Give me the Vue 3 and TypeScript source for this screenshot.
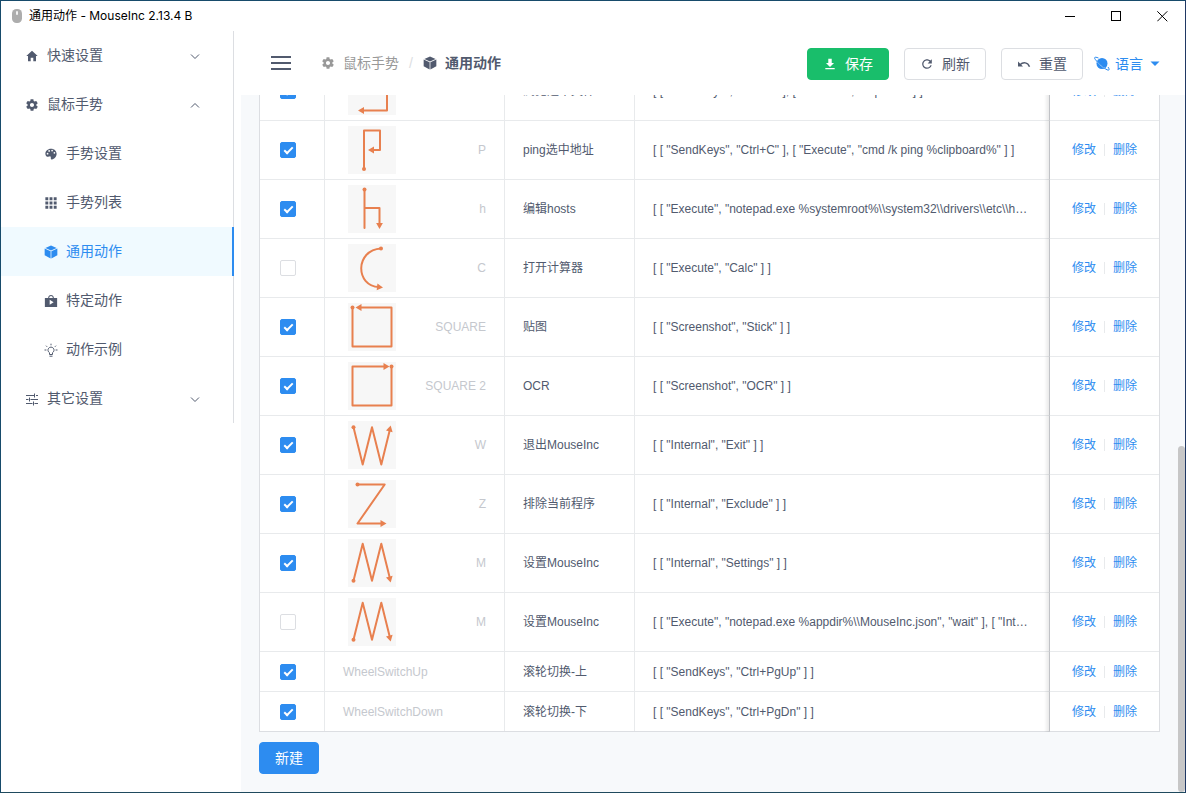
<script setup lang="ts">
import { nextTick, onMounted, ref } from 'vue'

type Point = [number, number]
type IconName =
  | 'home' | 'cog' | 'palette' | 'apps' | 'cube' | 'play' | 'bulb' | 'options'

interface MenuItem {
  label: string
  icon: IconName
  sub?: boolean
  active?: boolean
  arrow?: 'down' | 'up'
}

interface Action {
  enabled: boolean
  gesture?: string
  key: string
  name: string
  command: string
}

interface Gesture {
  start: Point
  path: string
  from: Point
  tip: Point
}

const icons: Record<IconName, string> = {
  home: 'M208 448V320h96v128h97.6V256H464L256 64 48 256h62.4v192z',
  cog: 'M413.967 276.8c1.06-6.235 1.06-13.518 1.06-20.8s-1.06-13.518-1.06-20.8l44.667-34.318c4.26-3.118 5.319-8.317 2.13-13.518L418.215 115.6c-2.129-4.164-8.507-6.235-12.767-4.164l-53.186 20.801c-10.638-8.32-23.4-15.601-36.16-20.801l-7.44-55.117c-1.06-4.157-5.319-8.319-10.638-8.319h-85.096c-5.319 0-9.577 4.161-10.638 8.319l-8.508 55.117c-12.767 5.2-24.464 12.482-36.171 20.801l-53.186-20.801c-5.319-2.071-10.638 0-12.767 4.164L49.1 187.365c-2.119 4.153-1.061 10.399 2.129 13.518L96.97 235.2c0 7.282-1.06 13.518-1.06 20.8s1.06 13.518 1.06 20.8l-44.668 34.318c-4.26 3.118-5.318 8.317-2.13 13.518L92.721 396.4c2.13 4.164 8.508 6.235 12.767 4.164l53.187-20.801c10.637 8.32 23.397 15.601 36.16 20.801l8.508 55.117c1.069 5.2 5.318 8.319 10.637 8.319h85.096c5.319 0 9.578-4.161 10.638-8.319l8.518-55.117c12.757-5.2 24.464-12.482 36.16-20.801l53.187 20.801c5.318 2.071 10.637 0 12.767-4.164l42.549-71.765c2.129-4.153 1.06-10.399-2.13-13.518l-46.8-34.317zm-158.499 52c-41.489 0-74.46-32.235-74.46-72.8s32.971-72.8 74.46-72.8 74.461 32.235 74.461 72.8-32.972 72.8-74.461 72.8z',
  palette: 'M256 60C135 60 50 145 50 245c0 76 44 114 98 114 34 0 58-20 82-16 26 5 20 32 18 56-3 34 12 58 42 56 92-8 172-96 172-204C462 143 372 60 256 60zM130 276a32 32 0 1 1 0-64 32 32 0 0 1 0 64zm58-98a32 32 0 1 1 0-64 32 32 0 0 1 0 64zm108-14a32 32 0 1 1 0-64 32 32 0 0 1 0 64zm84 82a32 32 0 1 1 0-64 32 32 0 0 1 0 64z',
  apps: 'M50 50h106v106H50zM203 50h106v106H203zM356 50h106v106H356zM50 203h106v106H50zM203 203h106v106H203zM356 203h106v106H356zM50 356h106v106H50zM203 356h106v106H203zM356 356h106v106H356z',
  cube: 'M256 16L50 106l206 96 206-96zM24 128v244l218 120V228zM488 128L270 228v264l218-120z',
  play: 'M360 144v-8c0-58-47-104-104-104s-104 46-104 104v8H32v328h448V144zm-168-8c0-35 29-64 64-64s64 29 64 64v8H192zm16 256V212l144 90z',
  bulb: '',
  options: ''
}

const menu: MenuItem[] = [
  { label: '快速设置', icon: 'home', arrow: 'down' },
  { label: '鼠标手势', icon: 'cog', arrow: 'up' },
  { label: '手势设置', icon: 'palette', sub: true },
  { label: '手势列表', icon: 'apps', sub: true },
  { label: '通用动作', icon: 'cube', sub: true, active: true },
  { label: '特定动作', icon: 'play', sub: true },
  { label: '动作示例', icon: 'bulb', sub: true },
  { label: '其它设置', icon: 'options', arrow: 'down' }
]

const gestures: Record<string, Gesture> = {
  hook: { start: [10, 5], path: 'M10 5H39V43.5H15', from: [39, 43.5], tip: [10, 43.5] },
  p: { start: [16, 43], path: 'M16 43V4.500H32V24H25', from: [32, 24], tip: [20, 24] },
  h: { start: [16.5, 4.5], path: 'M16.5 4.500V43V23H31.5V39', from: [31.5, 23], tip: [31.5, 44] },
  c: { start: [33, 4.5], path: 'M33 4.500C7 6 7 42 31 43', from: [27, 42.6], tip: [35, 43.5] },
  square: { start: [4.5, 4.5], path: 'M4.500 4.500V43.5H43.5V4.500H12', from: [43.5, 4.5], tip: [7.5, 4.5] },
  square2: { start: [43.5, 4.5], path: 'M43.5 4.500V43.5H4.500V4.500H37', from: [4.5, 4.5], tip: [41.5, 4.5] },
  w: { start: [5.5, 6.3], path: 'M5.500 6.300L14.7 43.5L24 6.300L33.3 43.5L41.8 9', from: [33.3, 43.5], tip: [42.7, 4.5] },
  z: { start: [9.5, 4.5], path: 'M9.500 4.500H36.7L9.500 43.5H34', from: [9.5, 43.5], tip: [38.5, 43.5] },
  m: { start: [5.5, 41.7], path: 'M5.500 41.7L14.7 4.800L24 41.7L33.3 4.800L41.8 39', from: [33.3, 4.8], tip: [42.7, 43.5] }
}

function arrowHead(g: Gesture): string {
  const dx = g.tip[0] - g.from[0]
  const dy = g.tip[1] - g.from[1]
  const len = Math.hypot(dx, dy)
  const ux = dx / len
  const uy = dy / len
  const bx = g.tip[0] - ux * 6
  const by = g.tip[1] - uy * 6
  const half = 3.4
  return `${g.tip[0]},${g.tip[1]} ${bx - uy * half},${by + ux * half} ${bx + uy * half},${by - ux * half}`
}

const actions = ref<Action[]>([
  { enabled: true, gesture: 'hook', key: '', name: '浏览选中文件', command: '[ [ "SendKeys", "Ctrl+C" ], [ "Execute", "explorer" ] ]' },
  { enabled: true, gesture: 'p', key: 'P', name: 'ping选中地址', command: '[ [ "SendKeys", "Ctrl+C" ], [ "Execute", "cmd /k ping %clipboard%" ] ]' },
  { enabled: true, gesture: 'h', key: 'h', name: '编辑hosts', command: '[ [ "Execute", "notepad.exe %systemroot%\\\\system32\\\\drivers\\\\etc\\\\hosts" ] ]' },
  { enabled: false, gesture: 'c', key: 'C', name: '打开计算器', command: '[ [ "Execute", "Calc" ] ]' },
  { enabled: true, gesture: 'square', key: 'SQUARE', name: '贴图', command: '[ [ "Screenshot", "Stick" ] ]' },
  { enabled: true, gesture: 'square2', key: 'SQUARE 2', name: 'OCR', command: '[ [ "Screenshot", "OCR" ] ]' },
  { enabled: true, gesture: 'w', key: 'W', name: '退出MouseInc', command: '[ [ "Internal", "Exit" ] ]' },
  { enabled: true, gesture: 'z', key: 'Z', name: '排除当前程序', command: '[ [ "Internal", "Exclude" ] ]' },
  { enabled: true, gesture: 'm', key: 'M', name: '设置MouseInc', command: '[ [ "Internal", "Settings" ] ]' },
  { enabled: false, gesture: 'm', key: 'M', name: '设置MouseInc', command: '[ [ "Execute", "notepad.exe %appdir%\\\\MouseInc.json", "wait" ], [ "Internal", "Reload" ] ]' },
  { enabled: true, key: 'WheelSwitchUp', name: '滚轮切换-上', command: '[ [ "SendKeys", "Ctrl+PgUp" ] ]' },
  { enabled: true, key: 'WheelSwitchDown', name: '滚轮切换-下', command: '[ [ "SendKeys", "Ctrl+PgDn" ] ]' }
])

const scroller = ref<HTMLElement | null>(null)

onMounted(async () => {
  await nextTick()
  if (scroller.value) scroller.value.scrollTop = scroller.value.scrollHeight
})
</script>

<template>
  <div class="window">
    <header class="titlebar">
      <svg class="mouse" viewBox="0 0 12 16" aria-hidden="true">
        <rect x="1" y="1" width="10" height="14" rx="4.5" fill="#adadad" />
        <rect x="5" y="3" width="2" height="4" rx="1" fill="#f2f2f2" />
      </svg>
      <span class="title">通用动作 - MouseInc 2.13.4 B</span>
      <div class="controls">
        <button type="button" aria-label="最小化">
          <svg viewBox="0 0 11 11"><path d="M0 5.500h10" /></svg>
        </button>
        <button type="button" aria-label="最大化">
          <svg viewBox="0 0 11 11"><path d="M.5.5h9v9h-9z" /></svg>
        </button>
        <button type="button" aria-label="关闭">
          <svg viewBox="0 0 11 11" class="smooth"><path d="M.3.3l10 10M10.3.3l-10 10" /></svg>
        </button>
      </div>
    </header>

    <div class="body">
      <aside class="sidebar">
        <nav>
          <ul class="menu">
            <li v-for="item in menu" :key="item.label">
              <a href="#" class="entry" :class="{ sub: item.sub, active: item.active }">
                <svg v-if="item.icon === 'bulb'" class="icon line" viewBox="0 0 14 14">
                  <path d="M5.500 11.500V9.700a3 3 0 1 1 3 0v1.800zM5.500 13.200h3M7 .7v1.600M2 2.700l1.100 1.100M12 2.700l-1.100 1.100M.5 7h1.900M11.600 7h1.900" />
                </svg>
                <svg v-else-if="item.icon === 'options'" class="icon line" viewBox="0 0 14 14">
                  <path d="M1 3.500h8M11 3.500h2M1 7.500h2.500M5.500 7.500H13M1 11.500h6.500M9.500 11.500H13M9.500 1.500v4M4.500 5.500v4M8.500 9.500v4" />
                </svg>
                <svg v-else class="icon" viewBox="0 0 512 512"><path :d="icons[item.icon]" /></svg>
                <span class="label">{{ item.label }}</span>
                <svg v-if="item.arrow" class="icon line chevron" viewBox="0 0 14 14">
                  <path :d="item.arrow === 'down' ? 'M3 5.5l4 4 4-4' : 'M3 9.5l4-4 4 4'" />
                </svg>
              </a>
            </li>
          </ul>
        </nav>
      </aside>

      <main class="main">
        <div class="toolbar">
          <button type="button" class="burger" aria-label="菜单">
            <svg viewBox="0 0 20 14"><path d="M0 1h20M0 7h20M0 13h20" /></svg>
          </button>
          <nav class="crumbs">
            <a href="#" class="crumb">
              <svg class="icon" viewBox="0 0 512 512"><path :d="icons.cog" /></svg>
              <span>鼠标手势</span>
            </a>
            <span class="slash">/</span>
            <span class="crumb current">
              <svg class="icon" viewBox="0 0 512 512"><path :d="icons.cube" /></svg>
              <span>通用动作</span>
            </span>
          </nav>
          <div class="tools">
            <button type="button" class="btn success">
              <svg class="icon" viewBox="0 0 512 512"><path d="M403 217h-84V64H193v153h-84l147 147zM85 398v50h342v-50z" /></svg>
              <span>保存</span>
            </button>
            <button type="button" class="btn">
              <svg class="icon" viewBox="0 0 512 512"><path d="M256 388c-72.600 0-132-59.400-132-132s59.400-132 132-132c36.300 0 69.300 15.400 92.400 39.600L278 234h154V80l-51.700 51.700C348.400 99.800 304.300 80 256 80c-96.800 0-176 79.200-176 176s78.100 176 176 176c81.400 0 149.600-55 169.400-132h-45.100c-18.700 51.700-67.100 88-124.300 88z" /></svg>
              <span>刷新</span>
            </button>
            <button type="button" class="btn">
              <svg class="icon" viewBox="0 0 14 14">
                <path d="M1 4.500v5h5z" />
                <path d="M3 7.800C6 4.800 10.800 5 12.500 9.800" fill="none" stroke="currentColor" stroke-width="1.500" />
              </svg>
              <span>重置</span>
            </button>
            <button type="button" class="language">
              <svg class="planet" viewBox="0 0 16 16">
                <circle cx="8" cy="7.500" r="5.500" fill="currentColor" />
                <path d="M1.500 4C4 7.500 8 11 12.500 13.300" stroke="#fff" stroke-width="1" fill="none" />
                <path d="M4.500 2C1 .6-.3 1.200 1.200 3.300 4 7.200 8.500 11.500 13 13.800c2.500 1 2.800-.3 1-2.800" stroke="currentColor" stroke-width="1" fill="none" />
              </svg>
              <span>语言</span>
              <svg class="icon" viewBox="0 0 14 14"><path d="M2.500 4.500h9L7 9z" /></svg>
            </button>
          </div>
        </div>

        <div ref="scroller" class="scroller">
          <table class="actions">
            <colgroup>
              <col class="c-check" />
              <col class="c-gesture" />
              <col class="c-name" />
              <col />
              <col class="c-ops" />
            </colgroup>
            <tbody>
              <tr v-for="(row, i) in actions" :key="i" :class="{ tall: row.gesture }">
                <td class="check">
                  <input v-model="row.enabled" type="checkbox" :aria-label="row.name" />
                </td>
                <td>
                  <div class="gesture">
                    <svg v-if="row.gesture" class="stroke" viewBox="0 0 48 48" aria-hidden="true">
                      <path :d="gestures[row.gesture].path" />
                      <circle :cx="gestures[row.gesture].start[0]" :cy="gestures[row.gesture].start[1]" r="2" />
                      <polygon :points="arrowHead(gestures[row.gesture])" />
                    </svg>
                    <span class="key">{{ row.key }}</span>
                  </div>
                </td>
                <td>{{ row.name }}</td>
                <td class="command">{{ row.command }}</td>
                <td class="ops">
                  <a href="#">修改</a><i class="divider"></i><a href="#">删除</a>
                </td>
              </tr>
            </tbody>
          </table>
          <button type="button" class="btn primary">新建</button>
        </div>
      </main>
    </div>
    <div class="scrollbar" aria-hidden="true"></div>
  </div>
</template>

<style>
body {
  margin: 0;
  overflow: hidden;
}
</style>

<style scoped>
* {
  box-sizing: border-box;
}

.window {
  position: relative;
  display: flex;
  flex-direction: column;
  height: 100vh;
  border: 1px solid #174b6b;
  border-right-color: #203864;
  border-bottom-color: #1f4a5e;
  background: #fff;
  color: #515a6e;
  font-family: "Liberation Sans", "Noto Sans CJK SC", sans-serif;
  font-size: 14px;
  line-height: 20px;
}

a {
  color: inherit;
  text-decoration: none;
}

button {
  margin: 0;
  padding: 0;
  border: 0;
  background: none;
  color: inherit;
  font: inherit;
  cursor: pointer;
}

svg {
  display: block;
  flex: none;
}

.icon {
  width: 14px;
  height: 14px;
  fill: currentColor;
}

.icon.line {
  fill: none;
  stroke: currentColor;
}

.titlebar {
  display: flex;
  flex: none;
  align-items: center;
  height: 30px;
  padding-left: 10px;
  color: #000;
  font-family: Inter, "Noto Sans CJK SC", sans-serif;
  font-size: 12px;
}

.mouse {
  width: 12px;
  height: 16px;
}

.title {
  margin-left: 6px;
}

.controls {
  display: flex;
  margin-left: auto;
}

.controls button {
  display: flex;
  align-items: center;
  justify-content: center;
  width: 46px;
  height: 30px;
}

.controls svg {
  width: 11px;
  height: 11px;
  fill: none;
  stroke: #000;
  shape-rendering: crispEdges;
}

.controls .smooth {
  shape-rendering: auto;
}

.body {
  display: flex;
  flex: 1;
  min-height: 0;
}

.sidebar {
  flex: none;
  width: 240px;
}

.menu {
  width: 233px;
  margin: 0;
  padding: 0;
  border-right: 1px solid #dcdee2;
  list-style: none;
}

.entry {
  display: flex;
  align-items: center;
  gap: 8px;
  height: 49px;
  padding: 0 31px 0 24px;
}

.entry.sub {
  padding-left: 43px;
}

.entry.active {
  margin-right: -1px;
  border-right: 2px solid #2d8cf0;
  background: #f0faff;
  color: #2d8cf0;
}

.label {
  padding-bottom: 2px;
}

.chevron {
  margin-left: auto;
}

.main {
  display: flex;
  flex: 1;
  flex-direction: column;
  min-width: 0;
  background: #f7f9fb;
}

.toolbar {
  display: flex;
  flex: none;
  align-items: center;
  height: 64px;
  padding: 0 23px 0 30px;
  background: #fff;
}

.burger svg {
  width: 20px;
  height: 14px;
  stroke: #515a6e;
  stroke-width: 2;
}

.crumbs {
  display: flex;
  align-items: center;
  margin-left: 30px;
}

.crumb {
  display: flex;
  align-items: center;
  gap: 8px;
  color: #999;
}

.crumb.current {
  color: #515a6e;
  font-weight: bold;
}

.slash {
  margin: 0 10px;
  color: #dcdee2;
}

.tools {
  display: flex;
  align-items: center;
  gap: 15px;
  margin-left: auto;
  padding-top: 2px;
}

.btn {
  display: flex;
  align-items: center;
  gap: 8px;
  height: 32px;
  padding: 0 15px;
  border: 1px solid #dcdee2;
  border-radius: 4px;
  background: #fff;
}

.btn.success {
  border-color: #19be6b;
  background: #19be6b;
  color: #fff;
}

.btn.primary {
  margin-top: 10px;
  border-color: #2d8cf0;
  background: #2d8cf0;
  color: #fff;
}

.language {
  display: flex;
  align-items: center;
  gap: 5px;
  margin-left: -4px;
  color: #2d8cf0;
}

.planet {
  width: 16px;
  height: 16px;
}

.scroller {
  flex: 1;
  min-height: 0;
  padding: 18px 25px 18px 18px;
  overflow-y: auto;
  scrollbar-width: none;
}

.actions {
  width: 100%;
  border: 1px solid #dcdee2;
  border-top: 0;
  border-spacing: 0;
  border-collapse: separate;
  background: #fff;
  font-size: 12px;
  line-height: 18px;
  table-layout: fixed;
}

.c-check {
  width: 65px;
}

.c-gesture {
  width: 180px;
}

.c-name {
  width: 130px;
}

.c-ops {
  width: 109px;
}

tr {
  height: 40px;
}

tr.tall {
  height: 59px;
}

tr:last-child {
  height: 39px;
}

td {
  padding: 0 18px;
  border-right: 1px solid #e8eaec;
  border-bottom: 1px solid #e8eaec;
  vertical-align: middle;
}

tr:last-child td {
  border-bottom: 0;
}

td.check {
  padding: 0 0 0 20px;
}

input[type="checkbox"] {
  position: relative;
  display: block;
  width: 16px;
  height: 16px;
  margin: 0;
  border: 1px solid #dcdee2;
  border-radius: 2px;
  background: #fff;
  appearance: none;
}

input[type="checkbox"]:checked {
  border-color: #2d8cf0;
  background: #2d8cf0;
}

input[type="checkbox"]:checked::after {
  position: absolute;
  top: 2px;
  left: 5px;
  box-sizing: border-box;
  width: 5px;
  height: 9px;
  border: 2px solid #fff;
  border-top: 0;
  border-left: 0;
  content: "";
  transform: rotate(45deg);
}

.gesture {
  display: flex;
  align-items: center;
  justify-content: space-between;
}

.stroke {
  width: 48px;
  height: 48px;
  margin-left: 5px;
  background: #f7f7f7;
  fill: none;
  stroke: #e8804f;
  stroke-width: 2;
  stroke-linejoin: round;
}

.stroke circle,
.stroke polygon {
  fill: #e8804f;
  stroke: none;
}

.key {
  color: #c5c8ce;
}

.command {
  overflow: hidden;
  border-right-color: #d4d6da;
  text-overflow: ellipsis;
  white-space: nowrap;
}

.ops {
  position: relative;
  padding: 0;
  border-right: 0;
  color: #2d8cf0;
  text-align: center;
  white-space: nowrap;
}

.ops::before {
  position: absolute;
  top: 0;
  bottom: -1px;
  left: -6px;
  width: 6px;
  background: linear-gradient(to left, rgba(0, 0, 0, 0.1), rgba(0, 0, 0, 0));
  content: "";
}

.divider {
  display: inline-block;
  width: 1px;
  height: 12px;
  margin: 0 8px;
  background: #e8eaec;
  vertical-align: -2px;
}

.scrollbar {
  position: absolute;
  right: 0;
  bottom: 0;
  width: 7px;
  height: 346px;
  border-radius: 4px;
  background: #c7c7c7;
}
</style>
